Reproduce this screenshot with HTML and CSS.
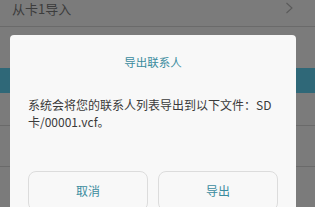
FILE: index.html
```html
<!DOCTYPE html>
<html>
<head>
<meta charset="utf-8">
<link rel="stylesheet" href="styles.css">
</head>
<body>
<div class="page">
  <div class="row first">
    <span class="row-text">从卡1导入</span>
    <svg class="chev" width="9" height="12" viewBox="0 0 9 12"><path d="M1.5 1 L7 6 L1.5 11" fill="none" stroke="#5a5a5a" stroke-width="1.1"/></svg>
  </div>
  <div class="gap1"></div>
  <div class="band"></div>
  <div class="row r2"></div>
  <div class="row r3"></div>
</div>
<div class="dialog">
  <div class="title">导出联系人</div>
  <div class="msg">系统会将您的联系人列表导出到以下文件：SD卡/00001.vcf。</div>
  <div class="buttons">
    <div class="btn">取消</div>
    <div class="btn">导出</div>
  </div>
</div>
</body>
</html>
```
FILE: styles.css
```css
html, body {
  margin: 0;
  padding: 0;
  width: 315px;
  height: 207px;
  overflow: hidden;
  background: #7b7b7b;
  font-family: "Noto Sans CJK SC", "Noto Sans", sans-serif;
}
.page {
  display: flex;
  flex-direction: column;
}
.row {
  box-sizing: border-box;
  border-bottom: 1px solid #6a6a6a;
}
.first {
  height: 27px;
  display: flex;
  align-items: flex-start;
  justify-content: space-between;
  padding: 1px 21px 0 12px;
}
.row-text {
  font-size: 13px;
  line-height: 15px;
  color: #3c3c3c;
}
.chev {
  margin-top: 1px;
}
.gap1 {
  height: 41px;
}
.band {
  height: 25px;
  background: #2f6878;
}
.r2 {
  height: 33px;
}
.r3 {
  height: 41px;
}
.dialog {
  position: absolute;
  left: 10px;
  top: 35px;
  width: 286px;
  height: 172px;
  overflow: hidden;
  background: #f8f8f8;
  border-radius: 4px 4px 0 0;
  box-sizing: border-box;
  padding: 19px 18px 0 18px;
}
.title {
  text-align: center;
  font-size: 11.5px;
  line-height: 16px;
  color: #3b8c9e;
}
.msg {
  margin-top: 26px;
  font-size: 12px;
  line-height: 17px;
  color: #3a3a3a;
  word-break: break-all;
}
.buttons {
  margin-top: 41px;
  display: flex;
  gap: 10px;
}
.btn {
  flex: 0 0 120px;
  height: 40px;
  box-sizing: border-box;
  border: 1px solid #dcdcdc;
  border-radius: 8px;
  text-align: center;
  font-size: 12px;
  line-height: 38px;
  color: #3b8c9e;
  background: #f8f8f8;
}
```
